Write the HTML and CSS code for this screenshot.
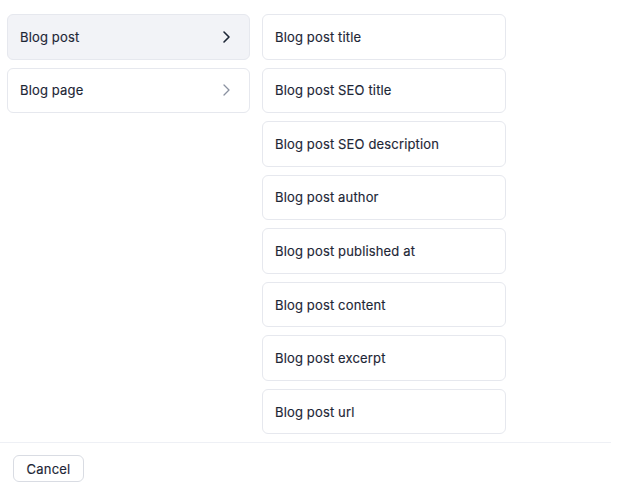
FILE: index.html
```html
<!DOCTYPE html>
<html lang="en">
<head>
<meta charset="utf-8">
<title>Blog fields</title>
<link rel="stylesheet" href="styles.css">
</head>
<body>
<div class="dialog">
  <div class="picker">
    <ul class="col col-groups">
      <li class="item active">
        <span>Blog post</span>
        <svg class="chev" viewBox="0 0 10 14" width="10" height="14"><path d="M3 2l5 5-5 5" fill="none" stroke="currentColor" stroke-width="1.6" stroke-linecap="round" stroke-linejoin="round"/></svg>
      </li>
      <li class="item">
        <span>Blog page</span>
        <svg class="chev" viewBox="0 0 10 14" width="10" height="14"><path d="M3 2l5 5-5 5" fill="none" stroke="currentColor" stroke-width="1.3" stroke-linecap="round" stroke-linejoin="round"/></svg>
      </li>
    </ul>
    <ul class="col col-fields">
      <li class="item">Blog post title</li>
      <li class="item">Blog post SEO title</li>
      <li class="item">Blog post SEO description</li>
      <li class="item">Blog post author</li>
      <li class="item">Blog post published at</li>
      <li class="item">Blog post content</li>
      <li class="item">Blog post excerpt</li>
      <li class="item">Blog post url</li>
    </ul>
  </div>
  <div class="footer">
    <button class="btn">Cancel</button>
  </div>
</div>
</body>
</html>
```
FILE: styles.css
```css
html, body {
  margin: 0;
  background: #ffffff;
}
body {
  font-family: Inter, "Noto Sans", sans-serif;
  font-size: 13px;
  color: #1d2636;
}
.dialog {
  width: 611px;
}
.picker {
  display: flex;
  gap: 12px;
  padding: 14px 0 8px 7px;
}
.col {
  list-style: none;
  margin: 0;
  padding: 0;
  display: flex;
  flex-direction: column;
  gap: 8.07px;
}
.col-groups {
  width: 243px;
}
.col-fields {
  width: 244px;
}
.item {
  box-sizing: border-box;
  height: 45.5px;
  display: flex;
  align-items: center;
  justify-content: space-between;
  padding: 0 18px 0 12px;
  border: 1px solid #e6e8ee;
  border-radius: 6px;
  letter-spacing: 0.15px;
  -webkit-text-stroke: 0.15px currentColor;
}
.item.active {
  background: #f2f3f7;
}
.chev {
  color: #8a91a0;
}
.item.active .chev {
  color: #1d2636;
}
.footer {
  border-top: 1.5px solid #eef0f5;
  padding: 12px 0 0 13px;
}
.btn {
  font-family: inherit;
  font-size: 13px;
  color: #1d2636;
  background: #fff;
  border: 1px solid #d9dce3;
  border-radius: 6px;
  width: 71px;
  height: 27px;
  padding: 0;
  letter-spacing: 0.2px;
  -webkit-text-stroke: 0.15px currentColor;
}
```
